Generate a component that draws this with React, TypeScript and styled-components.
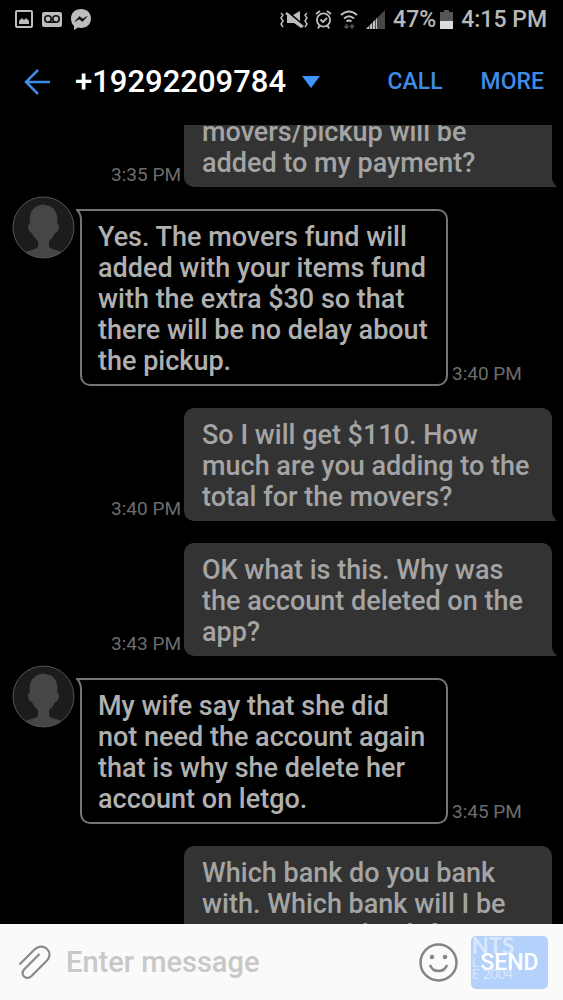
import React from "react";
import styled, { createGlobalStyle } from "styled-components";

const GlobalStyle = createGlobalStyle`
  * { box-sizing: border-box; }
  body { margin: 0; background: #000; font-family: Roboto, "Liberation Sans", sans-serif; }
  button, input { font-family: inherit; }
`;

const Screen = styled.div`
  display: flex;
  flex-direction: column;
  height: 100vh;
  background: #000;
  overflow: hidden;
`;

const StatusBar = styled.div`
  display: flex;
  justify-content: space-between;
  align-items: center;
  height: 38px;
  padding: 0 16px 0 15px;
  color: #b8b8b8;
  font-size: 23px;
  font-weight: 500;
`;

const StatusGroup = styled.div<{ $gap: number }>`
  display: flex;
  align-items: center;
  gap: ${(p) => p.$gap}px;
`;

const Header = styled.header`
  display: flex;
  align-items: center;
  height: 87px;
  padding: 0 19px 0 24px;
`;

const IconButton = styled.button`
  display: flex;
  padding: 0;
  border: 0;
  background: none;
  cursor: pointer;
`;

const ContactButton = styled.button`
  display: flex;
  align-items: center;
  gap: 16px;
  flex: 1;
  padding: 0;
  margin-left: 24px;
  border: 0;
  background: none;
  color: #fff;
  font-size: 31px;
  font-weight: 500;
  line-height: 38px;
`;

const Actions = styled.nav`
  display: flex;
  gap: 38px;
`;

const TextButton = styled.button`
  padding: 0;
  border: 0;
  background: none;
  color: #3f8be6;
  font-size: 23px;
  font-weight: 500;
  line-height: 28px;
`;

const Thread = styled.main`
  display: flex;
  flex: 1;
  flex-direction: column;
  gap: 22px;
  min-height: 0;
  padding: 0 11px 0 12px;
  overflow: hidden;
`;

const Row = styled.article<{ $out?: boolean; $scrolled?: boolean }>`
  display: flex;
  flex-shrink: 0;
  justify-content: ${(p) => (p.$out ? "flex-end" : "flex-start")};
  align-items: flex-end;
  gap: ${(p) => (p.$out ? 3 : 4)}px;
  margin-top: ${(p) => (p.$scrolled ? -20 : 0)}px;
`;

const Bubble = styled.div<{ $out?: boolean }>`
  position: relative;
  width: 368px;
  padding: ${(p) => (p.$out ? "12px 18px 8px" : "11px 16px 7px")};
  border: ${(p) => (p.$out ? "0" : "2px solid #757575")};
  border-radius: ${(p) => (p.$out ? "10px 10px 0 10px" : "0 10px 10px 10px")};
  background: ${(p) => (p.$out ? "#333" : "#000")};
  color: ${(p) => (p.$out ? "#a4a4a4" : "#b0b0b0")};
  font-size: 27px;
  font-weight: 500;
  line-height: 31px;
`;

const Line = styled.span`
  display: block;
  white-space: nowrap;
`;

const OutTail = styled.svg`
  position: absolute;
  right: -5px;
  bottom: 0;
`;

const InTail = styled.svg`
  position: absolute;
  left: -6px;
  top: -2px;
`;

const Time = styled.time`
  color: #6c6c6c;
  font-size: 19px;
  line-height: 24px;
  white-space: nowrap;
`;

const Avatar = styled.svg`
  flex-shrink: 0;
  align-self: flex-start;
  margin: -13px 1px 0 0;
`;

const Composer = styled.form`
  display: flex;
  align-items: center;
  height: 76px;
  flex-shrink: 0;
  padding: 0 15px 0 18px;
  background: #fafafa;
`;

const MessageInput = styled.input`
  flex: 1;
  min-width: 0;
  margin-left: 14px;
  padding: 0;
  border: 0;
  outline: 0;
  background: none;
  font-size: 29px;
  font-weight: 500;
  &::placeholder { color: #c8c8c8; opacity: 1; }
`;

const SendButton = styled.button`
  position: relative;
  width: 77px;
  height: 53px;
  margin-left: 13px;
  padding: 0;
  border: 0;
  border-radius: 5px;
  background: #b3d1fa;
  color: #fff;
  font-size: 23px;
  font-weight: 500;
`;

const Watermark = styled.div`
  position: absolute;
  top: 0;
  right: 34px;
  color: #fff;
  font-family: Lato, sans-serif;
  font-size: 13px;
  font-weight: 400;
  line-height: 12px;
  white-space: nowrap;
  text-align: left;
  opacity: 0.5;
`;

const WatermarkTitle = styled.div`
  font-size: 22px;
  font-weight: 700;
  line-height: 20px;
`;

const Person = () => (
  <Avatar width="63" height="63" viewBox="0 0 63 63" aria-hidden="true">
    <defs>
      <clipPath id="face"><circle cx="31.5" cy="31.5" r="30.5" /></clipPath>
    </defs>
    <circle cx="31.5" cy="31.5" r="30.5" fill="#1c1c1c" />
    <path clipPath="url(#face)" fill="#464646" d="M29 9c2-1 3-1 3 0 8 0 14 5 13.500 17 0 1-.2 1.500-.3 2 2.500 0 2.300 6-.2 8-1.500.8-2 1-2.500 2-1 3-3.500 5-5.500 7v4c0 2 1 3 3 4 5 1.500 9 2 13 5v8H10v-8c4-3 8-3.500 13-5 2-1 3-2 3-4v-4c-2-2-4.500-4-5.500-7-.5-1-1-1.200-2.500-2-2.500-2-2.700-8-.2-8C17 17 20 11 29 9z" />
    <circle cx="31.5" cy="31.5" r="30.5" fill="none" stroke="#555" />
  </Avatar>
);

type Message = { out?: boolean; time?: string; lines: string[]; scrolled?: boolean };

const messages: Message[] = [
  { out: true, scrolled: true, time: "3:35 PM", lines: ["movers/pickup will be", "added to my payment?"] },
  { time: "3:40 PM", lines: ["Yes. The movers fund will", "added with your items fund", "with the extra $30 so that", "there will be no delay about", "the pickup."] },
  { out: true, time: "3:40 PM", lines: ["So I will get $110. How", "much are you adding to the", "total for the movers?"] },
  { out: true, time: "3:43 PM", lines: ["OK what is this. Why was", "the account deleted on the", "app?"] },
  { time: "3:45 PM", lines: ["My wife say that she did", "not need the account again", "that is why she delete her", "account on letgo."] },
  { out: true, lines: ["Which bank do you bank", "with. Which bank will I be", "receiving my bank from?"] },
];

const MessageRow = ({ m }: { m: Message }) => (
  <Row $out={m.out} $scrolled={m.scrolled}>
    {m.out ? m.time && <Time>{m.time}</Time> : <Person />}
    <Bubble $out={m.out}>
      {m.lines.map((l) => <Line key={l}>{l}</Line>)}
      {m.out ? (
        <OutTail width="6" height="9" viewBox="0 0 6 9"><path d="M0 0h1c0 3 2 6 5 9H0z" fill="#333" /></OutTail>
      ) : (
        <InTail width="8" height="16" viewBox="0 0 8 16">
          <path d="M0 0h8v16H4z" fill="#000" />
          <path d="M8 1H1c3 3 4 6 4 10v5" fill="none" stroke="#757575" strokeWidth="2" />
        </InTail>
      )}
    </Bubble>
    {!m.out && <Time>{m.time}</Time>}
  </Row>
);

const ImageIcon = () => (
  <svg width="18" height="19" viewBox="0 0 18 19" aria-hidden="true">
    <rect x="1" y="1" width="16" height="16" rx="1" fill="none" stroke="#bdbdbd" strokeWidth="2" />
    <path d="M4 14v-3l3-3 2 2 2-2 3 3v3z" fill="#bdbdbd" />
  </svg>
);

const VoicemailIcon = () => (
  <svg width="20" height="15" viewBox="0 0 20 15" aria-hidden="true">
    <rect width="20" height="15" rx="2" fill="#bdbdbd" />
    <g fill="none" stroke="#111" strokeWidth="1.6">
      <circle cx="6" cy="7" r="3.2" /><circle cx="14" cy="7" r="3.2" /><path d="M6 10.2h8" />
    </g>
  </svg>
);

const MessengerIcon = () => (
  <svg width="20" height="21" viewBox="0 0 20 21" aria-hidden="true">
    <path d="M10 0c6 0 10 4 10 9.500s-4 9.500-10 9.500q-2 0-3-.4L3 21v-4Q0 14 0 9.500C0 4 4 0 10 0z" fill="#bdbdbd" />
    <path d="M4 12.500l4.500-5 3.200 2.500L16 7.500l-4.500 5-3.200-2.500z" fill="#111" stroke="#111" strokeWidth=".6" />
  </svg>
);

const MutedIcon = () => (
  <svg width="28" height="19" viewBox="0 0 28 19" aria-hidden="true">
    <path d="M1 3l2 2-2 3 2 3-2 3 2 3M27 3l-2 2 2 3-2 3 2 3-2 3" fill="none" stroke="#bdbdbd" strokeWidth="1.5" />
    <path d="M20 1v10l-7-6zM7 6h2l12 10v2l-7-5H7z" fill="#bdbdbd" />
    <path d="M6 3l17 14" stroke="#bdbdbd" strokeWidth="2.500" />
  </svg>
);

const AlarmIcon = () => (
  <svg width="17" height="19" viewBox="0 0 17 19" fill="none" stroke="#bdbdbd" strokeWidth="1.800" aria-hidden="true">
    <circle cx="8.500" cy="10" r="6.600" />
    <path d="M5.500 9.500L8 12l4-4M1 4l4-3M16 4l-4-3M4.500 15.500L3 18.500M12.500 15.500l1.500 3" />
  </svg>
);

const WifiIcon = () => (
  <svg width="18" height="19" viewBox="0 0 18 19" fill="none" stroke="#bdbdbd" strokeWidth="2" aria-hidden="true">
    <path d="M1 5q8-7 16 0M4 8.500q5-4.500 10 0M6.500 11.500q2.500-2 5 0" />
    <path d="M6.500 14v4M4.500 16l2 2 2-2M12 19v-4M10 17l2-2 2 2" stroke="#555" strokeWidth="1.500" />
  </svg>
);

const SignalIcon = () => (
  <svg width="19" height="19" viewBox="0 0 19 19" aria-hidden="true">
    <path d="M0 19L19 0v19z" fill="#484848" />
    <path d="M0 19l3-3v3zM4 19v-4l2-2v6zM7 19v-7l2-2v9zM10 19V9l1-1v11z" fill="#c4c4c4" />
  </svg>
);

const BatteryIcon = () => (
  <svg width="13" height="19" viewBox="0 0 13 19" aria-hidden="true">
    <path d="M0 2h4V0h5v2h4v17H0z" fill="#555" /><path d="M0 11h13v8H0z" fill="#dcdcdc" />
  </svg>
);

export default function App() {
  return (
    <Screen>
      <GlobalStyle />
      <StatusBar>
        <StatusGroup $gap={9}>
          <ImageIcon />
          <VoicemailIcon />
          <MessengerIcon />
        </StatusGroup>
        <StatusGroup $gap={8}>
          <StatusGroup $gap={7}>
            <MutedIcon />
            <AlarmIcon />
          </StatusGroup>
          <WifiIcon />
          <SignalIcon />
          <StatusGroup $gap={4}>
            <span>47%</span>
            <BatteryIcon />
          </StatusGroup>
          <span>4:15 PM</span>
        </StatusGroup>
      </StatusBar>
      <Header>
        <IconButton aria-label="Back">
          <svg width="27" height="26" viewBox="0 0 27 26" fill="none" stroke="#3f8be6" strokeWidth="2.500"><path d="M14 1L2 13l12 12M2 13h24" /></svg>
        </IconButton>
        <ContactButton>
          +19292209784
          <svg width="18" height="12" viewBox="0 0 18 12"><path d="M0 0h18L9 12z" fill="#3f94ff" /></svg>
        </ContactButton>
        <Actions>
          <TextButton>CALL</TextButton>
          <TextButton>MORE</TextButton>
        </Actions>
      </Header>
      <Thread>
        {messages.map((m) => <MessageRow key={m.lines[0]} m={m} />)}
      </Thread>
      <Composer onSubmit={(e) => e.preventDefault()}>
        <IconButton type="button" aria-label="Attach">
          <svg width="34" height="36" viewBox="0 0 34 36" fill="none" stroke="#8a8a8a" strokeWidth="2.200">
            <path d="M1.500 20.500L16.500 5.500c3.500-3.500 8.500-4 12-1 4 3.500 4 8.500.5 12L13.500 32c-2.500 2.500-5.500 2.500-7.500.5s-2-5 .3-7.300L21.500 10" />
          </svg>
        </IconButton>
        <MessageInput aria-label="Message" placeholder="Enter message" />
        <IconButton type="button" aria-label="Emoji">
          <svg width="39" height="39" viewBox="0 0 39 39" fill="none" stroke="#858585" strokeWidth="2.500">
            <circle cx="19.500" cy="19.500" r="18" />
            <path d="M11 22c3 8 14 8 17 0" />
            <circle cx="13" cy="14" r="2.200" fill="#858585" stroke="none" /><circle cx="26" cy="14" r="2.200" fill="#858585" stroke="none" />
          </svg>
        </IconButton>
        <SendButton type="submit">
          SEND
          <Watermark aria-hidden="true"><WatermarkTitle>NTS</WatermarkTitle>L<br />E 2004</Watermark>
        </SendButton>
      </Composer>
    </Screen>
  );
}
